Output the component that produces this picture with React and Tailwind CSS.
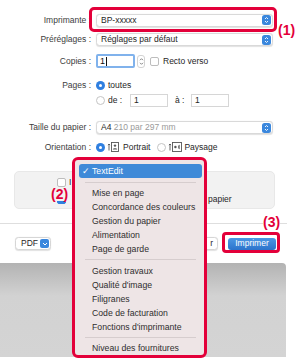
import React from 'react';
import clsx from 'clsx';

const RED = 'border-[#e3003a]';

function Stepper() {
  return (
    <span className="flex h-[10px] w-[9px] items-center justify-center rounded-[2.5px] bg-[#3a87dd]">
      <svg width="5" height="8" viewBox="0 0 5 8">
        <path d="M1 3L2.5 1.5L4 3M1 5L2.5 6.5L4 5" stroke="white" strokeWidth="0.9" fill="none" />
      </svg>
    </span>
  );
}

function Popup({ children }) {
  return (
    <div className="flex h-[13px] w-[177px] items-center justify-between rounded-[3.5px] border border-[#d9d9d9] bg-white pl-[4px] pr-[1px] shadow-[0_0.5px_1px_rgba(0,0,0,0.12)]">
      <span className="text-[#262626]">{children}</span>
      <Stepper />
    </div>
  );
}

function Row({ label, className, children }) {
  return (
    <div className={clsx('flex items-center', className)}>
      <div className="w-[91px] text-right text-[#3c3c3c]">{label}</div>
      <div className="ml-[5px] flex items-center">{children}</div>
    </div>
  );
}

function Checkbox({ checked }) {
  return (
    <span
      className={clsx(
        'block h-[9px] w-[9px] rounded-[2px] border',
        checked ? 'border-[#2f7fe0] bg-[#2f7fe0]' : 'border-[#bdbdbd] bg-white'
      )}
    />
  );
}

function Radio({ on }) {
  return on ? (
    <span className="flex h-[9px] w-[9px] items-center justify-center rounded-full bg-[#2f7fe0]">
      <span className="h-[3px] w-[3px] rounded-full bg-white" />
    </span>
  ) : (
    <span className="block h-[9px] w-[9px] rounded-full border border-[#c4c4c4] bg-white" />
  );
}

function SmallInput({ className }) {
  return (
    <div className={clsx('flex h-[13px] w-[38px] items-center border border-[#d6d6d6] bg-white pl-[3px] text-[#262626]', className)}>
      1
    </div>
  );
}

function PortraitIcon() {
  return (
    <svg width="12" height="10" viewBox="0 0 12 10">
      <path d="M2 8.5V2M0.9 3.1L2 2l1.1 1.1" stroke="#555" fill="none" strokeWidth="0.9" />
      <rect x="4.5" y="0.5" width="7" height="9" fill="none" stroke="#555" strokeWidth="0.9" />
      <circle cx="8" cy="3.6" r="1.2" fill="#555" />
      <path d="M5.8 7.6c0-1.7 4.4-1.7 4.4 0z" fill="#555" />
    </svg>
  );
}

function LandscapeIcon() {
  return (
    <svg width="14" height="10" viewBox="0 0 14 10">
      <path d="M2 8.5V2M0.9 3.1L2 2l1.1 1.1" stroke="#555" fill="none" strokeWidth="0.9" />
      <rect x="4.5" y="0.5" width="9" height="9" fill="none" stroke="#555" strokeWidth="0.9" />
      <circle cx="7.4" cy="5" r="1.2" fill="#555" />
      <path d="M11.6 2.8c-1.9 0-1.9 4.4 0 4.4z" fill="#555" />
    </svg>
  );
}

function Sep({ className }) {
  return <div className={clsx('mx-[6px] h-px bg-[#d6cdce]', className)} />;
}

function Item({ children }) {
  return <div className="flex h-[14px] items-center pl-[13px]">{children}</div>;
}

export default function App() {
  return (
    <div className="relative h-[361px] w-[297px] overflow-hidden bg-white font-['Liberation_Sans',Arial,sans-serif] text-[8.5px] leading-none">
      {/* print sheet */}
      <div className="flex h-[263px] w-[287px] flex-col bg-white">
        <Row label="Imprimante :" className="mt-[12px] h-[16px]">
          <Popup>BP-xxxxx</Popup>
        </Row>
        <Row label="Préréglages :" className="mt-[5px] h-[13px]">
          <Popup>Réglages par défaut</Popup>
        </Row>
        <Row label="Copies :" className="mt-[8px] h-[14px]">
          <div className="flex h-[14px] w-[39px] items-center rounded-[2px] border-2 border-[#80b2ec] bg-white pl-[2px] text-[9px] text-[#111]">
            1<span className="ml-px h-[9px] w-px bg-[#111]" />
          </div>
          <span className="ml-[2px] flex h-[13px] w-[8px] flex-col items-center justify-center rounded-[3px] border border-[#d3d3d3] bg-white">
            <svg width="5" height="9" viewBox="0 0 5 9">
              <path d="M1 3.2L2.5 1.7L4 3.2M1 5.8L2.5 7.3L4 5.8" stroke="#666" strokeWidth="0.8" fill="none" />
            </svg>
          </span>
          <span className="ml-[5px]">
            <Checkbox />
          </span>
          <span className="ml-[4px] text-[#262626]">Recto verso</span>
        </Row>
        <Row label="Pages :" className="mt-[12px] h-[10px]">
          <Radio on />
          <span className="ml-[3px] text-[#262626]">toutes</span>
        </Row>
        <Row label="" className="mt-[3px] h-[14px]">
          <Radio />
          <span className="ml-[3px] w-[22px] text-[#262626]">de :</span>
          <SmallInput />
          <span className="ml-[7px] w-[16px] text-[#262626]">à :</span>
          <SmallInput />
        </Row>
        <Row label="Taille du papier :" className="mt-[14px] h-[13px]">
          <Popup>
            A4 <span className="text-[#9a9a9a]">210 par 297 mm</span>
          </Popup>
        </Row>
        <Row label="Orientation :" className="mt-[7px] h-[12px]">
          <Radio on />
          <span className="ml-[2px]">
            <PortraitIcon />
          </span>
          <span className="ml-[4px] text-[#262626]">Portrait</span>
          <span className="ml-[7px]">
            <Radio />
          </span>
          <span className="ml-[2px]">
            <LandscapeIcon />
          </span>
          <span className="ml-[2px] text-[#262626]">Paysage</span>
        </Row>

        <div className="mx-[14px] mt-[18px] flex h-[38px] w-[261px] flex-col rounded-[5px] border border-[#e8e8e8] bg-[#f2f2f2] pl-[42px] pt-[6px]">
          <div className="flex items-center">
            <Checkbox />
            <span className="ml-[3px] text-[#262626]">I</span>
          </div>
          <div className="mt-[8px] flex items-center">
            <Checkbox checked />
            <span className="ml-[142px] text-[#262626]">papier</span>
          </div>
        </div>

        <div className="mt-[14px] h-px w-full bg-[#dedede]" />

        <div className="mt-[13px] flex h-[13px] items-center">
          <div className="ml-[15px] flex h-[13px] w-[36px] items-center justify-between rounded-[3.5px] border border-[#d6d6d6] bg-white pl-[5px] pr-[1px] text-[#262626] shadow-[0_0.5px_1px_rgba(0,0,0,0.12)]">
            PDF
            <span className="flex h-[9px] w-[9px] items-center justify-center rounded-[2px] bg-[#3a87dd]">
              <svg width="6" height="4" viewBox="0 0 6 4">
                <path d="M1 1L3 3L5 1" stroke="white" strokeWidth="1" fill="none" />
              </svg>
            </span>
          </div>
          <div className="ml-auto flex h-[13px] w-[45px] items-center justify-end rounded-[3.5px] border border-[#d6d6d6] bg-white pr-[4px] text-[#262626] shadow-[0_0.5px_1px_rgba(0,0,0,0.12)]">
            r
          </div>
          <div className="ml-[10px] mr-[11px] flex h-[12px] w-[48px] items-center justify-center rounded-[3px] bg-[linear-gradient(#4b97e4,#2c73cb)] text-white">
            Imprimer
          </div>
        </div>
      </div>

      {/* document behind */}
      <div className="h-[94px] w-[286px] rounded-tr-[4px] bg-[linear-gradient(to_bottom,#b3b3b3,#d2d2d2_35%,#d4d4d4)]" />

      {/* annotations */}
      <div className={clsx('absolute left-[89px] top-[7px] h-[25px] w-[188px] rounded-[5px] border-[3px]', RED)} />
      <div className="absolute left-[278px] top-[23px] text-[14px] font-bold leading-none text-[#e3003a]">(1)</div>
      <div className="absolute left-[51px] top-[187px] bg-[#f2f2f2] text-[14px] font-bold leading-none text-[#e3003a]">(2)</div>
      <div className="absolute left-[263px] top-[215px] bg-white text-[14px] font-bold leading-none text-[#e3003a]">(3)</div>
      <div className={clsx('absolute left-[222px] top-[232px] h-[21px] w-[58px] rounded-[4px] border-[3px]', RED)} />

      {/* pane menu */}
      <div className={clsx('absolute left-[72px] top-[157px] h-[201px] w-[135px] rounded-[6px] border-[3px] bg-[#eee5e6] pl-[4px] pr-[2px] pt-[4px] text-[8.7px] text-[#2e2e2e]', RED)}>
        <div className="flex h-[14px] items-center rounded-[3px] bg-[#3f8ad8] pl-[3px] text-white">
          <span className="w-[10px]">✓</span>TextEdit
        </div>
        <Sep className="mb-[3px] mt-[4px]" />
        <Item>Mise en page</Item>
        <Item>Concordance des couleurs</Item>
        <Item>Gestion du papier</Item>
        <Item>Alimentation</Item>
        <Item>Page de garde</Item>
        <Sep className="mb-[4px] mt-[3px]" />
        <Item>Gestion travaux</Item>
        <Item>Qualité d'image</Item>
        <Item>Filigranes</Item>
        <Item>Code de facturation</Item>
        <Item>Fonctions d'imprimante</Item>
        <Sep className="mb-[3px] mt-[3px]" />
        <Item>Niveau des fournitures</Item>
      </div>
    </div>
  );
}
